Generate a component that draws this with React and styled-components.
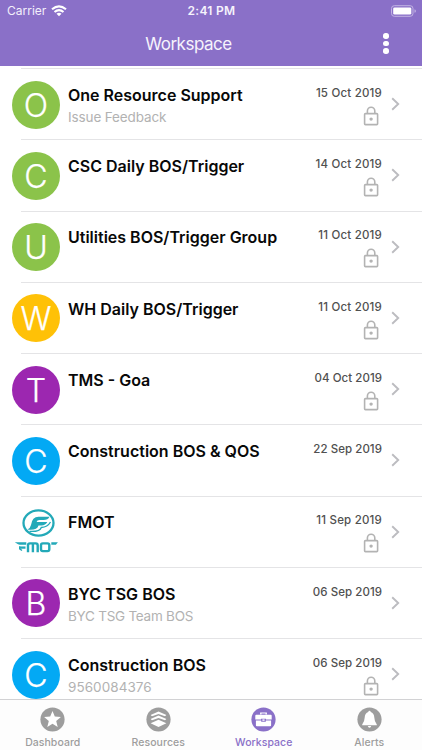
import React from 'react';
import styled, {createGlobalStyle} from 'styled-components';

const GlobalStyle = createGlobalStyle`
    * {
        box-sizing: border-box;
    }
    body {
        margin: 0;
        background: #fff;
        font-family: Inter, "Liberation Sans", sans-serif;
    }
`
const Screen = styled.div`
    width: 422px;
    height: 750px;
    display: flex;
    flex-direction: column;
    overflow: hidden;
    background: #fff;
`
const Header = styled.header`
    height: 66px;
    flex: none;
    background: #8a70c8;
    color: #fff;
`
const StatusBar = styled.div`
    height: 22px;
    display: grid;
    grid-template-columns: 1fr auto 1fr;
    align-items: center;
    padding: 0 6px 0 7px;
`
const Carrier = styled.div`
    display: flex;
    align-items: center;
    gap: 5px;
    font-size: 12px;
    line-height: 22px;
    color: #f3effb;
`
const Clock = styled.div`
    font-size: 12px;
    line-height: 22px;
    font-weight: 600;
    letter-spacing: 0.3px;
    color: #f6f3fc;
`
const BatterySlot = styled.div`
    display: flex;
    justify-content: flex-end;
`
const NavBar = styled.div`
    height: 43px;
    display: grid;
    grid-template-columns: 377px 1fr;
    align-items: center;
`
const NavTitle = styled.h1`
    margin: 0;
    font-size: 17px;
    line-height: 22px;
    font-weight: 400;
    letter-spacing: -0.5px;
    text-align: center;
    color: #f6f3fc;
`
const MenuButton = styled.div`
    width: 18px;
    display: flex;
    flex-direction: column;
    align-items: center;
    gap: 2.2px;
    span {
        width: 5.4px;
        height: 5.4px;
        border-radius: 50%;
        background: #fff;
    }
`
const List = styled.main`
    flex: 1;
    min-height: 0;
    padding-top: 2px;
    overflow: hidden;
`
const Divider = styled.div`
    height: 1px;
    margin-left: 21px;
    background: #e4e4e6;
`
const Row = styled.div`
    height: 70.25px;
    display: flex;
    padding: 11.5px 22px 0 12px;
`
const Avatar = styled.div`
    width: 48px;
    height: 48px;
    flex: none;
    border-radius: 50%;
    background: ${props => props.$color};
    color: #fff;
    font-size: 32px;
    line-height: 49px;
    font-weight: 300;
    text-align: center;
    -webkit-text-stroke: 0.25px #fff;
`
const Details = styled.div`
    flex: 1;
    padding: 3.4px 0 0 8px;
    white-space: nowrap;
`
const Title = styled.div`
    font-size: 16px;
    line-height: 22px;
    font-weight: 600;
    color: #080808;
`
const Subtitle = styled.div`
    font-size: 13.5px;
    line-height: 20px;
    margin-top: 1px;
    letter-spacing: ${props => props.$spacing || 0}px;
    color: #b2b2b2;
`
const Meta = styled.div`
    display: flex;
    flex-direction: column;
    align-items: flex-end;
    padding-top: 4.4px;
    svg {
        margin: 5px 3px 0 0;
    }
`
const DateText = styled.div`
    font-size: 11.5px;
    line-height: 16px;
    font-weight: 500;
    letter-spacing: ${props => props.$spacing}px;
    white-space: nowrap;
    color: #505050;
`
const Arrow = styled.div`
    padding: 16.5px 0 0 9px;
    line-height: 0;
`
const TabBar = styled.nav`
    height: 51px;
    flex: none;
    display: grid;
    grid-template-columns: repeat(4, 1fr);
    border-top: 1px solid #d2d2d4;
    background: #fdfdfd;
`
const Tab = styled.div`
    display: flex;
    flex-direction: column;
    align-items: center;
    padding-top: 7px;
    color: ${props => props.$active ? '#8a70c8' : '#9d9d9d'};
    font-size: 10.5px;
    line-height: 14px;
    font-weight: 500;
    letter-spacing: 0.05px;
    svg {
        margin-bottom: 4px;
    }
`

const GREEN = '#8bc34a'
const AMBER = '#ffc107'
const PURPLE = '#9c27b0'
const BLUE = '#03a9f4'

const groups = [
    {name: 'One Resource Support', note: 'Issue Feedback', noteSpacing: -0.12, date: '15 Oct 2019', letter: 'O', color: GREEN, locked: true},
    {name: 'CSC Daily BOS/Trigger', date: '14 Oct 2019', letter: 'C', color: GREEN, locked: true},
    {name: 'Utilities BOS/Trigger Group', date: '11 Oct 2019', letter: 'U', color: GREEN, locked: true},
    {name: 'WH Daily BOS/Trigger', date: '11 Oct 2019', letter: 'W', color: AMBER, locked: true},
    {name: 'TMS - Goa', date: '04 Oct 2019', letter: 'T', color: PURPLE, locked: true},
    {name: 'Construction BOS & QOS', date: '22 Sep 2019', letter: 'C', color: BLUE, locked: false},
    {name: 'FMOT', date: '11 Sep 2019', locked: true},
    {name: 'BYC TSG BOS', note: 'BYC TSG Team BOS', noteSpacing: -0.25, date: '06 Sep 2019', letter: 'B', color: PURPLE, locked: false},
    {name: 'Construction BOS', note: '9560084376', noteSpacing: 0.05, date: '06 Sep 2019', letter: 'C', color: BLUE, locked: true},
]

function WifiIcon() {
    return (
        <svg width="16" height="12" viewBox="0 0 16 12" fill="none" stroke="#fff" strokeWidth="2.1">
            <path d="M1 4.3Q8 -1.7 15 4.3"/>
            <path d="M3.5 7Q8 3.2 12.5 7"/>
            <path d="M8 11.3L5.5 8.8Q8 6.9 10.5 8.8Z" fill="#fff" stroke="none"/>
        </svg>
    )
}

function BatteryIcon() {
    return (
        <svg width="26" height="12" viewBox="0 0 26 12">
            <rect x="1.5" y="0.7" width="21.5" height="10.6" rx="2.8" fill="none" stroke="#c2b4e3"/>
            <rect x="3.2" y="2.4" width="18.1" height="7.2" rx="1.4" fill="#fff"/>
            <path d="M24.5 4.2Q25.9 4.6 25.9 6T24.5 7.8Z" fill="#c2b4e3"/>
        </svg>
    )
}

function LockIcon() {
    return (
        <svg width="16" height="20" viewBox="0 0 16 20" fill="none" stroke="#b3b3b3" strokeWidth="1.6">
            <rect x="1.6" y="7.6" width="13" height="11" rx="0.8"/>
            <path d="M4.4 7.5V5a3.7 3.7 0 0 1 7.4 0V7.5"/>
            <circle cx="8.1" cy="13.1" r="1.7" fill="#b3b3b3" stroke="none"/>
        </svg>
    )
}

function ChevronIcon() {
    return (
        <svg width="9" height="14" viewBox="0 0 9 14" fill="none" stroke="#bcbcc0" strokeWidth="1.9">
            <path d="M1.2 1.3L7.2 7L1.2 12.7"/>
        </svg>
    )
}

function FmotLogo() {
    return (
        <svg width="48" height="48" viewBox="0 0 48 48" fill="none" stroke="#23a9b8">
            <ellipse cx="26.5" cy="15" rx="15" ry="12.6" strokeWidth="2.3"/>
            <path d="M15.5 21.5Q18.3 20.3 19 17Q20.2 8.8 26.5 8.8H37.5Q36 12 31.5 12H27.5Q25 12 24.6 14H35.3Q33.5 17.4 29.5 17.4H26.5Q25 22.6 15.5 21.5Z" fill="#23a9b8" stroke="none"/>
            <path d="M17.5 23.4Q28 24 29.3 19.5Q35.5 19.2 38.5 14" strokeWidth="1.3"/>
            <path d="M2.8 34.3H14.3V36.8H7.7L6 36.2Z" fill="#23a9b8" stroke="none"/>
            <path d="M7 39.6H13.5" strokeWidth="2.3"/>
            <path d="M7.7 38.6V40.8L10 42.5" strokeWidth="1.4"/>
            <path d="M16 44.2V37.4Q16 35.4 18 35.4H23.7Q25.7 35.4 25.7 37.4V44.2M20.9 35.4V44.2" strokeWidth="2.4"/>
            <rect x="29" y="35.4" width="8.3" height="7.7" rx="1.8" strokeWidth="2.4"/>
            <path d="M39.3 34.3H45.9L43.9 36.8H39.3Z" fill="#23a9b8" stroke="none"/>
        </svg>
    )
}

function TabIcon({name}) {
    return (
        <svg width="25" height="25" viewBox="0 0 25 25">
            <circle cx="12.5" cy="12.5" r="12.1" fill="currentColor"/>
            {name === 'star' &&
                <path d="M12.5 3.9L14.8 9.6L20.9 10.1L16.2 14L17.7 20.1L12.5 16.8L7.3 20.1L8.8 14L4.1 10.1L10.2 9.6Z" fill="#fff"/>}
            {name === 'layers' &&
                <g fill="#fff">
                    <path d="M12.5 4.6L20.4 8L19 9.2L12.5 7.1L6 9.2L4.6 8Z"/>
                    <path d="M12.5 8.6L20.4 12L19 13.2L12.5 11.1L6 13.2L4.6 12Z"/>
                    <path d="M12.5 12.7L20.4 16.3L12.5 20L4.6 16.3Z"/>
                </g>}
            {name === 'briefcase' &&
                <g fill="#fff">
                    <path d="M9.1 7.4V5.4H15.9V7.4H14.5V6.6H10.5V7.4Z"/>
                    <path d="M5.3 7.7H19.7Q20.7 7.7 20.7 8.7V12.5H15V11.8H10V12.5H4.3V8.7Q4.3 7.7 5.3 7.7Z"/>
                    <path d="M4.9 13.5H10.2V14.7H14.8V13.5H20.1V18.3Q20.1 19.3 19.1 19.3H5.9Q4.9 19.3 4.9 18.3Z"/>
                    <rect x="11.4" y="12.4" width="2.2" height="1.4"/>
                </g>}
            {name === 'bell' &&
                <g fill="#fff">
                    <path d="M12.5 3.8Q13.6 3.8 13.7 5.1Q17.1 6.2 17.3 10.6Q17.5 15.1 19.8 17.5V18.2H5.2V17.5Q7.5 15.1 7.7 10.6Q7.9 6.2 11.3 5.1Q11.4 3.8 12.5 3.8Z"/>
                    <path d="M10.8 19.1H14.2Q13.8 20.7 12.5 20.7T10.8 19.1Z"/>
                </g>}
        </svg>
    )
}

function GroupRow({group}) {
    let dateSpacing = group.date.startsWith('1') ? 0.2 : 0.05;
    return (
        <>
            <Divider/>
            <Row>
                {group.letter ? <Avatar $color={group.color}>{group.letter}</Avatar> : <FmotLogo/>}
                <Details>
                    <Title>{group.name}</Title>
                    {group.note && <Subtitle $spacing={group.noteSpacing}>{group.note}</Subtitle>}
                </Details>
                <Meta>
                    <DateText $spacing={dateSpacing}>{group.date}</DateText>
                    {group.locked && <LockIcon/>}
                </Meta>
                <Arrow><ChevronIcon/></Arrow>
            </Row>
        </>
    )
}

export default function App() {
    return (
        <Screen>
            <GlobalStyle/>
            <Header>
                <StatusBar>
                    <Carrier>Carrier <WifiIcon/></Carrier>
                    <Clock>2:41 PM</Clock>
                    <BatterySlot><BatteryIcon/></BatterySlot>
                </StatusBar>
                <NavBar>
                    <NavTitle>Workspace</NavTitle>
                    <MenuButton><span/><span/><span/></MenuButton>
                </NavBar>
            </Header>
            <List>
                {groups.map(group => <GroupRow key={group.name} group={group}/>)}
            </List>
            <TabBar>
                <Tab><TabIcon name="star"/>Dashboard</Tab>
                <Tab><TabIcon name="layers"/>Resources</Tab>
                <Tab $active><TabIcon name="briefcase"/>Workspace</Tab>
                <Tab><TabIcon name="bell"/>Alerts</Tab>
            </TabBar>
        </Screen>
    )
}
